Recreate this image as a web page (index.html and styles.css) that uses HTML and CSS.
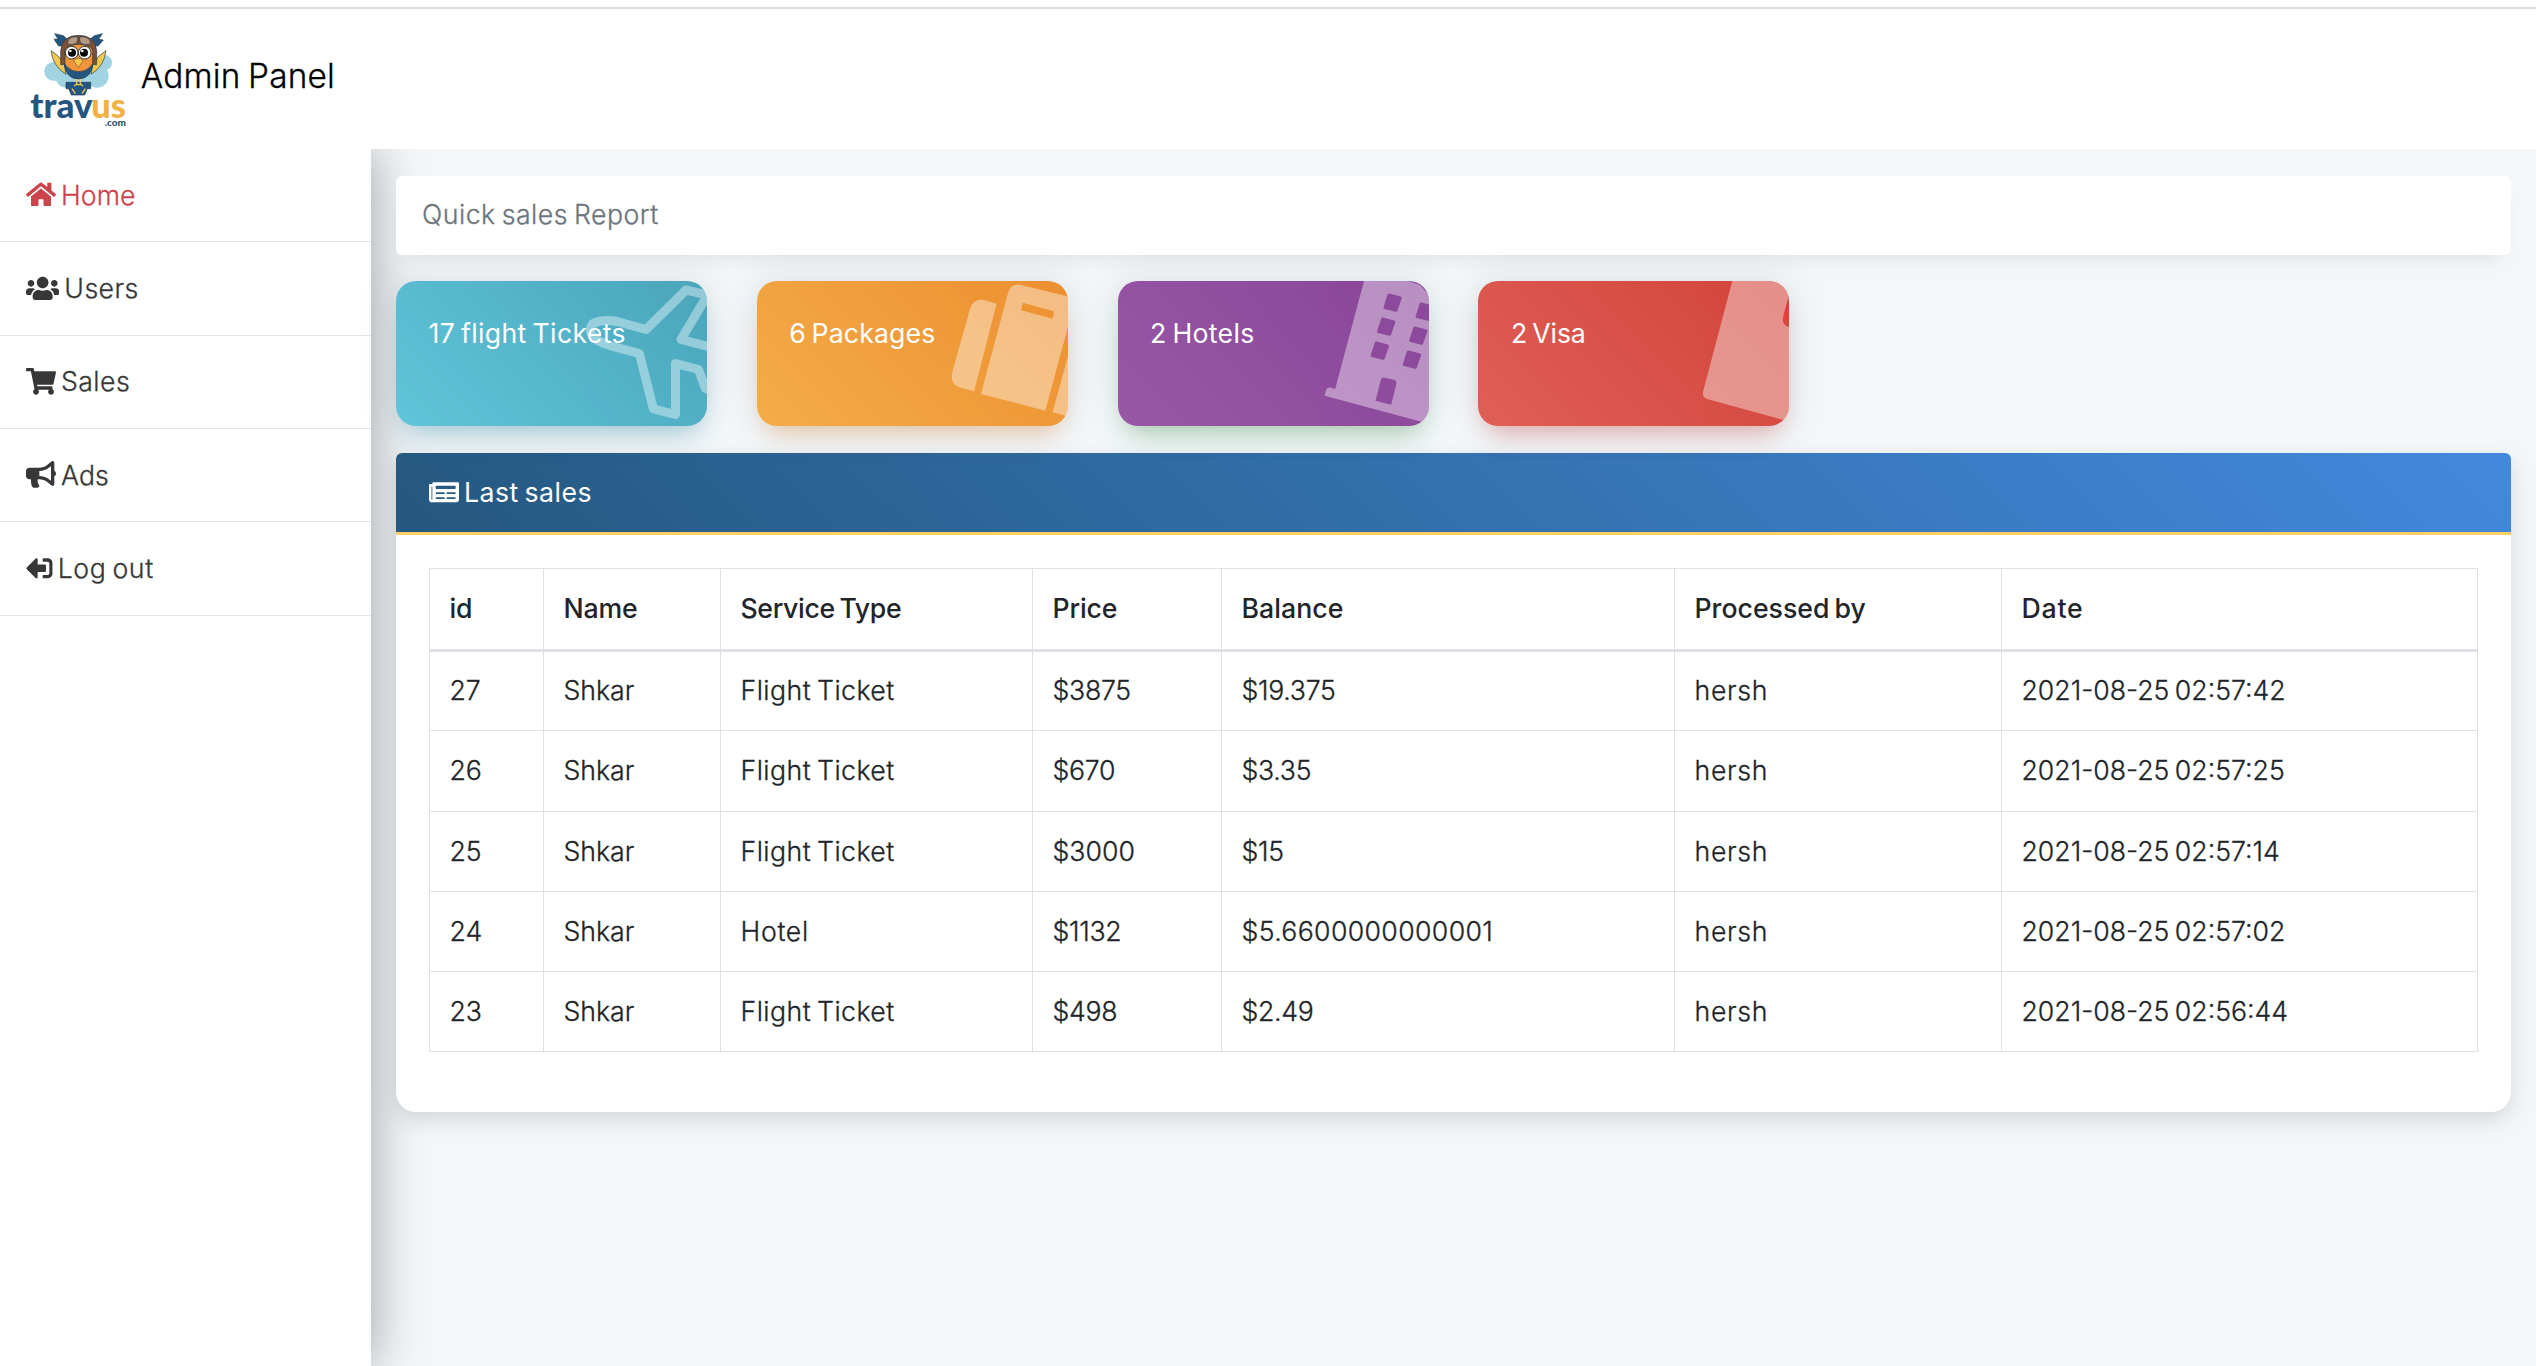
FILE: index.html
```html
<!DOCTYPE html>
<html lang="en">
<head>
<meta charset="utf-8">
<title>Admin Panel</title>
<link rel="stylesheet" href="styles.css">
</head>
<body>
<header class="topbar">
  <svg class="logo" viewBox="90 95 290 285" role="img" aria-label="travus.com">
    <g fill="#a2d3e2"><circle cx="162" cy="213" r="29"/><circle cx="313" cy="187" r="23"/><circle cx="291" cy="227" r="35"/><circle cx="197" cy="233" r="29"/><rect x="162" y="190" width="140" height="61" rx="28"/></g>
    <g stroke="#22394a" stroke-width="2" stroke-linejoin="round">
      <path fill="#24567f" d="M193 136L176 137L162 117L174 116L164 100L190 106L203 118ZM277 136L294 137L310 119L296 117L307 100L283 106L268 118Z"/>
      <path fill="#f3c84d" d="M153 151Q174 163 192 187L198 222Q158 197 153 151ZM318 151Q297 163 280 187L273 222Q313 197 318 151Z"/>
      <path fill="#24567f" d="M192 190Q198 235 235 236Q273 235 279 190Z"/>
      <ellipse cx="236" cy="168" rx="48" ry="46" fill="#f0953a"/>
      <path fill="#7d5033" d="M182 193V151Q186 105 236 105Q285 105 290 151V193Q281 195 278 189V149Q268 133 236 132Q204 133 195 149V189Q190 195 182 193Z"/>
      <path fill="#b79a83" d="M204 120Q216 105 234 111L231 128Q216 136 203 131ZM238 111Q258 105 270 120L271 131Q254 136 241 128Z"/>
    </g>
    <circle cx="215" cy="157" r="19" fill="#fff" stroke="#333" stroke-width="3"/>
    <circle cx="254" cy="157" r="19" fill="#fff" stroke="#333" stroke-width="3"/>
    <circle cx="216" cy="157" r="12" fill="#080808"/><circle cx="252" cy="157" r="12" fill="#080808"/>
    <circle cx="211" cy="152" r="4" fill="#fff"/><circle cx="247" cy="152" r="4" fill="#fff"/>
    <path fill="#f3c84d" stroke="#8c5a20" stroke-width="2" d="M221 181Q235 167 249 181L235 202Z"/>
    <path fill="#24567f" stroke="#183b59" stroke-width="2" d="M198 246H272V265H262L254 284H214L206 265H198Z"/>
    <path fill="none" stroke="#f3c84d" stroke-width="4" d="M230 236V251L222 257M241 236V251L249 257M227 253H245M216 265L226 280M256 265L246 280"/>
    <text class="brand" x="91" y="354" font-size="102" textLength="187" lengthAdjust="spacingAndGlyphs" fill="#24567f">trav</text>
    <text class="brand" x="274" y="354" font-size="102" textLength="104" lengthAdjust="spacingAndGlyphs" fill="#f1b145">us</text>
    <text class="brand" x="314" y="376" font-size="28" textLength="64" lengthAdjust="spacingAndGlyphs" fill="#24567f">.com</text>
  </svg>
  <span class="title">Admin Panel</span>
</header>
<div class="layout">
  <nav class="sidebar">
    <a class="item active"><svg class="icon" viewBox="0 0 576 512"><path d="M280.37 148.26L96 300.11V464a16 16 0 0 0 16 16l112.06-.29a16 16 0 0 0 15.92-16V368a16 16 0 0 1 16-16h64a16 16 0 0 1 16 16v95.64a16 16 0 0 0 16 16.05L464 480a16 16 0 0 0 16-16V300L295.67 148.26a12.19 12.19 0 0 0-15.3 0zM571.6 251.47L488 182.56V44.05a12 12 0 0 0-12-12h-56a12 12 0 0 0-12 12v72.61L318.47 43a48 48 0 0 0-61 0L4.34 251.47a12 12 0 0 0-1.6 16.9l25.5 31A12 12 0 0 0 45.15 301l235.22-193.74a12.19 12.19 0 0 1 15.3 0L530.9 301a12 12 0 0 0 16.9-1.6l25.5-31a12 12 0 0 0-1.7-16.93z"/></svg><span>Home</span></a>
    <a class="item"><svg class="icon" viewBox="0 0 640 512"><path d="M96 224c35.3 0 64-28.7 64-64s-28.7-64-64-64-64 28.7-64 64 28.7 64 64 64zm448 0c35.3 0 64-28.7 64-64s-28.7-64-64-64-64 28.7-64 64 28.7 64 64 64zm32 32h-64c-17.6 0-33.5 7.1-45.1 18.6 40.3 22.1 68.9 62 75.1 109.4h66c17.7 0 32-14.3 32-32v-32c0-35.3-28.7-64-64-64zm-256 0c61.9 0 112-50.1 112-112S381.9 32 320 32 208 82.1 208 144s50.1 112 112 112zm76.8 32h-8.3c-20.8 10-43.9 16-68.5 16s-47.6-6-68.5-16h-8.3C179.6 288 128 339.6 128 403.2V432c0 26.5 21.5 48 48 48h288c26.5 0 48-21.5 48-48v-28.8c0-63.6-51.6-115.2-115.2-115.2zm-223.7-13.4C161.5 263.1 145.6 256 128 256H64c-35.3 0-64 28.7-64 64v32c0 17.7 14.3 32 32 32h65.9c6.3-47.4 34.9-87.3 75.2-109.4z"/></svg><span>Users</span></a>
    <a class="item"><svg class="icon" viewBox="0 0 576 512"><path d="M528.12 301.319l47.273-208C578.806 78.301 567.391 64 551.99 64H159.208l-9.166-44.81C147.758 8.021 137.93 0 126.529 0H24C10.745 0 0 10.745 0 24v16c0 13.255 10.745 24 24 24h69.883l70.248 343.435C147.325 417.1 136 435.222 136 456c0 30.928 25.072 56 56 56s56-25.072 56-56c0-15.674-6.447-29.835-16.824-40h209.647C430.447 426.165 424 440.326 424 456c0 30.928 25.072 56 56 56s56-25.072 56-56c0-22.172-12.888-41.332-31.579-50.405l5.517-24.276c3.413-15.018-8.002-29.319-23.403-29.319H218.117l-6.545-32h293.145c11.206 0 20.92-7.754 23.403-18.681z"/></svg><span>Sales</span></a>
    <a class="item snug"><svg class="icon" viewBox="0 0 576 512"><path d="M576 240c0-23.63-12.95-44.04-32-55.12V32.01C544 23.26 537.02 0 512 0c-7.12 0-14.19 2.38-19.98 7.02l-85.03 68.03C364.28 109.19 310.66 128 256 128H64c-35.35 0-64 28.65-64 64v96c0 35.35 28.65 64 64 64h33.7c-1.39 10.48-2.18 21.14-2.18 32 0 39.77 9.26 77.35 25.56 110.94 5.19 10.69 16.52 17.06 28.4 17.06h74.28c26.05 0 41.69-29.84 25.9-50.56-16.4-21.52-26.15-48.36-26.15-77.44 0-11.11 1.62-21.79 4.41-32H256c54.66 0 108.28 18.81 150.98 52.95l85.03 68.03a32.023 32.023 0 0 0 19.98 7.02c24.92 0 32-22.78 32-32V295.13C563.05 284.04 576 263.63 576 240zm-96 141.42l-33.05-26.44C392.95 311.78 325.12 288 256 288v-96c69.12 0 136.95-23.78 190.95-66.98L480 98.58v282.84z"/></svg><span>Ads</span></a>
    <a class="item last"><svg class="icon flip" viewBox="0 0 512 512"><path d="M497 273L329 441c-15 15-41 4.500-41-17v-96H152c-13.300 0-24-10.700-24-24v-96c0-13.300 10.700-24 24-24h136V88c0-21.400 25.900-32 41-17l168 168c9.300 9.400 9.300 24.600 0 34zM192 436v-40c0-6.600-5.400-12-12-12H96c-17.700 0-32-14.300-32-32V160c0-17.700 14.300-32 32-32h84c6.600 0 12-5.400 12-12V76c0-6.600-5.400-12-12-12H96c-53 0-96 43-96 96v192c0 53 43 96 96 96h84c6.600 0 12-5.400 12-12z"/></svg><span>Log out</span></a>
  </nav>
  <main class="content">
    <section class="report">Quick sales Report</section>
    <section class="cards">
      <div class="card flights">
        <svg class="art" viewBox="0 0 311 145"><path fill="none" stroke="#fff" stroke-width="9" stroke-linejoin="round" d="M314 14.500L290 9L250 48.500L221 40.500Q206 37.500 196.500 43Q190 51 202 59.500Q208 63 217 65.500L243.300 72.500L257.500 128L279.500 133.500V82.500L302.500 88.500L309.500 107.500L318 110M311.500 14L285 58.500L316 66.500"/></svg>
        <span>17 flight Tickets</span>
      </div>
      <div class="card packages">
        <svg class="art" viewBox="0 0 311 145"><path fill="#fff" fill-rule="evenodd" d="M239.600 22.700L228 19.300Q216.500 16.500 213 28L195.500 90Q192 103 203 106.500L217.100 110.300ZM311 15.500L263 3.800Q254 2 251 12L224 113L288.300 129.700L311 45.700ZM265.800 21.700L297 30.300L295.600 37.700L264 29.300ZM311 75L295.600 131.300L311 135.500Z"/></svg>
        <span>6 Packages</span>
      </div>
      <div class="card hotels">
        <svg class="art" viewBox="0 0 311 145">
          <path fill="#fff" fill-rule="evenodd" d="M246 0H290L302 4L311 14V143L303.500 140.700L206.600 114.700L208 109Q209 106 212 106.500L217.200 108ZM265.500 96.500L276.500 99Q279 100 278.300 103L273.200 123.700L257.600 119.700L263 98Q264 96 265.500 96.500Z"/>
        </svg>
        <svg class="windows" viewBox="0 0 311 145"><defs><path id="pane" stroke-width="3" stroke-linejoin="round" d="M271 14L282.300 17L278 29.300L267 26.500Z"/></defs><use href="#pane"/><use href="#pane" x="-6.400" y="24"/><use href="#pane" x="-12.800" y="48"/><use href="#pane" x="32.100" y="9"/><use href="#pane" x="25.700" y="33"/><use href="#pane" x="19.300" y="57"/></svg>
        <span>2 Hotels</span>
      </div>
      <div class="card visa">
        <svg class="art" viewBox="0 0 311 145"><path fill="#fff" d="M254.300 0H311V14L305 36Q303.500 44 311 46V140.500L229 118Q224 116 225 111Z"/></svg>
        <span>2 Visa</span>
      </div>
    </section>
    <section class="panel">
      <h2 class="panel-head"><svg class="icon" viewBox="0 0 576 512"><path d="M552 64H88c-13.255 0-24 10.745-24 24v8H24c-13.255 0-24 10.745-24 24v272c0 30.928 25.072 56 56 56h472c26.510 0 48-21.490 48-48V88c0-13.255-10.745-24-24-24zM56 400a8 8 0 0 1-8-8V144h16v248a8 8 0 0 1-8 8zm236-16H140c-6.627 0-12-5.373-12-12v-8c0-6.627 5.373-12 12-12h152c6.627 0 12 5.373 12 12v8c0 6.627-5.373 12-12 12zm208 0H348c-6.627 0-12-5.373-12-12v-8c0-6.627 5.373-12 12-12h152c6.627 0 12 5.373 12 12v8c0 6.627-5.373 12-12 12zm-208-96H140c-6.627 0-12-5.373-12-12v-8c0-6.627 5.373-12 12-12h152c6.627 0 12 5.373 12 12v8c0 6.627-5.373 12-12 12zm208 0H348c-6.627 0-12-5.373-12-12v-8c0-6.627 5.373-12 12-12h152c6.627 0 12 5.373 12 12v8c0 6.627-5.373 12-12 12zm0-96H140c-6.627 0-12-5.373-12-12v-40c0-6.627 5.373-12 12-12h360c6.627 0 12 5.373 12 12v40c0 6.627-5.373 12-12 12z"/></svg><span>Last sales</span></h2>
      <div class="panel-body">
        <table class="sales">
          <colgroup><col class="w-id"><col class="w-name"><col class="w-type"><col class="w-price"><col class="w-balance"><col class="w-by"><col class="w-date"></colgroup>
          <thead><tr><th>id</th><th>Name</th><th class="tight">Service Type</th><th>Price</th><th class="wide">Balance</th><th class="slim">Processed by</th><th class="wider">Date</th></tr></thead>
          <tbody>
            <tr><td>27</td><td>Shkar</td><td class="type">Flight Ticket</td><td class="num">$3875</td><td class="num">$19.375</td><td class="by">hersh</td><td>2021-08-25 02:57:42</td></tr>
            <tr><td>26</td><td>Shkar</td><td class="type">Flight Ticket</td><td class="num">$670</td><td class="num">$3.35</td><td class="by">hersh</td><td>2021-08-25 02:57:25</td></tr>
            <tr><td>25</td><td>Shkar</td><td class="type">Flight Ticket</td><td>$3000</td><td class="num">$15</td><td class="by">hersh</td><td>2021-08-25 02:57:14</td></tr>
            <tr><td>24</td><td>Shkar</td><td class="hotel">Hotel</td><td class="num">$1132</td><td class="long">$5.6600000000001</td><td class="by">hersh</td><td>2021-08-25 02:57:02</td></tr>
            <tr><td>23</td><td>Shkar</td><td class="type">Flight Ticket</td><td class="num">$498</td><td class="num">$2.49</td><td class="by">hersh</td><td>2021-08-25 02:56:44</td></tr>
          </tbody>
        </table>
      </div>
    </section>
  </main>
</div>
</body>
</html>
```
FILE: styles.css
```css
* { box-sizing: border-box; }
html, body { height: 100%; }
body {
  margin: 0;
  display: flex;
  flex-direction: column;
  overflow: hidden;
  background: #f3f7fa;
  color: #212529;
  font: 300 26.67px/40px Inter, "Liberation Sans", sans-serif;
  word-spacing: -2px;
}
.topbar {
  position: relative;
  z-index: 1;
  flex: none;
  height: 149px;
  padding: 7px 0 0 30px;
  display: flex;
  align-items: flex-start;
  gap: 14px;
  background: linear-gradient(#dcdcdc, #dcdcdc) 0 7px / 100% 2px no-repeat #fff;
}
.logo { width: 96.7px; height: 95px; margin-top: 24.7px; }
.brand { font-family: Lato, sans-serif; font-weight: 900; }
.title { margin-top: 48.5px; font-size: 33.33px; color: #000; letter-spacing: .2px; }
.title, .item span, .report, .sales td { -webkit-text-stroke: .3px currentColor; }
.layout { flex: 1; display: flex; min-height: 0; }
.sidebar {
  flex: none;
  width: 371px;
  background: #fff;
  box-shadow: 0 0 50px rgba(0, 0, 0, .36);
}
.item {
  display: flex;
  align-items: center;
  gap: 5px;
  height: 93.33px;
  padding: 0 0 1px 26px;
  border-bottom: 1px solid #e2e4e5;
  color: #373737;
  letter-spacing: .45px;
}
.item.active { color: #cc444b; letter-spacing: .1px; }
.item.snug { letter-spacing: .1px; }
.item.last { letter-spacing: .6px; }
.icon { height: 26.67px; fill: currentColor; flex: none; }
.flip { transform: scaleX(-1); }
.content { flex: 1; padding: 27px 25px 0; }
.report {
  height: 79px;
  padding: 18px 26px;
  border-radius: 6px;
  background: #fff;
  color: #6c757d;
  letter-spacing: .5px;
  box-shadow: 0 12px 22px -12px rgba(0, 0, 0, .12);
}
.cards { display: flex; gap: 49.8px; margin-top: 26px; }
.card {
  position: relative;
  width: 311px;
  height: 145px;
  padding: 32px 32.5px;
  border-radius: 20px;
  overflow: hidden;
  color: #fff;
  font-weight: 400;
}
.card span { position: relative; }
.art, .windows { position: absolute; inset: 0; width: 311px; height: 145px; }
.art { opacity: .4; }
.windows { fill: #8d499c; stroke: #8d499c; }
.flights { background: linear-gradient(45deg, #60c5da, #4ba5bb); box-shadow: 0 0 40px rgba(0, 0, 0, .1), 0 16px 26px -10px rgba(75, 166, 188, .45); letter-spacing: .35px; }
.packages { background: linear-gradient(45deg, #f4ac49, #ec9031); box-shadow: 0 0 40px rgba(0, 0, 0, .1), 0 16px 26px -10px rgba(237, 146, 51, .4); letter-spacing: .13px; }
.hotels { background: linear-gradient(45deg, #9858a6, #8a4599); box-shadow: 0 0 40px rgba(0, 0, 0, .1), 0 16px 26px -10px rgba(76, 160, 80, .4); letter-spacing: .3px; }
.visa { background: linear-gradient(45deg, #df5f57, #d3443a); box-shadow: 0 0 40px rgba(0, 0, 0, .1), 0 16px 26px -10px rgba(221, 75, 65, .4); letter-spacing: -.15px; }
.panel {
  height: 659px;
  margin-top: 27px;
  border-radius: 6px 6px 20px 20px;
  background: #fff;
  box-shadow: 0 8px 24px -2px rgba(0, 0, 0, .15);
}
.panel-head {
  display: flex;
  align-items: center;
  gap: 5px;
  height: 82px;
  margin: 0;
  padding: 0 0 1px 33px;
  border-bottom: 3px solid #f9cf66;
  border-radius: 6px 6px 0 0;
  background: linear-gradient(45deg, #25587f, #4289dd) border-box;
  color: #fff;
  font-size: inherit;
  font-weight: 400;
  letter-spacing: .45px;
}
.panel-body { padding: 33px 33px 0; }
.sales { width: 2048px; table-layout: fixed; border-collapse: collapse; }
.sales th, .sales td {
  height: 80px;
  padding: 0 19.5px 2px;
  border: 1px solid #dee2e6;
  text-align: left;
  white-space: nowrap;
}
.sales th { height: 82px; border-bottom-width: 3px; font-weight: 500; letter-spacing: -.15px; }
.sales tbody tr:nth-child(2) td { height: 81px; }
.w-id { width: 114px; }
.w-name { width: 177px; }
.w-type { width: 312px; }
.w-price { width: 189px; }
.w-balance { width: 453px; }
.w-by { width: 327px; }
.w-date { width: 476px; }
.sales .tight { letter-spacing: -.35px; }
.sales .slim { letter-spacing: 0; }
.sales .wide { letter-spacing: .05px; }
.sales .wider { letter-spacing: .8px; }
.type { letter-spacing: .45px; }
.long { letter-spacing: .35px; }
.hotel, .by { letter-spacing: .7px; }
.num { letter-spacing: -.3px; }
```
